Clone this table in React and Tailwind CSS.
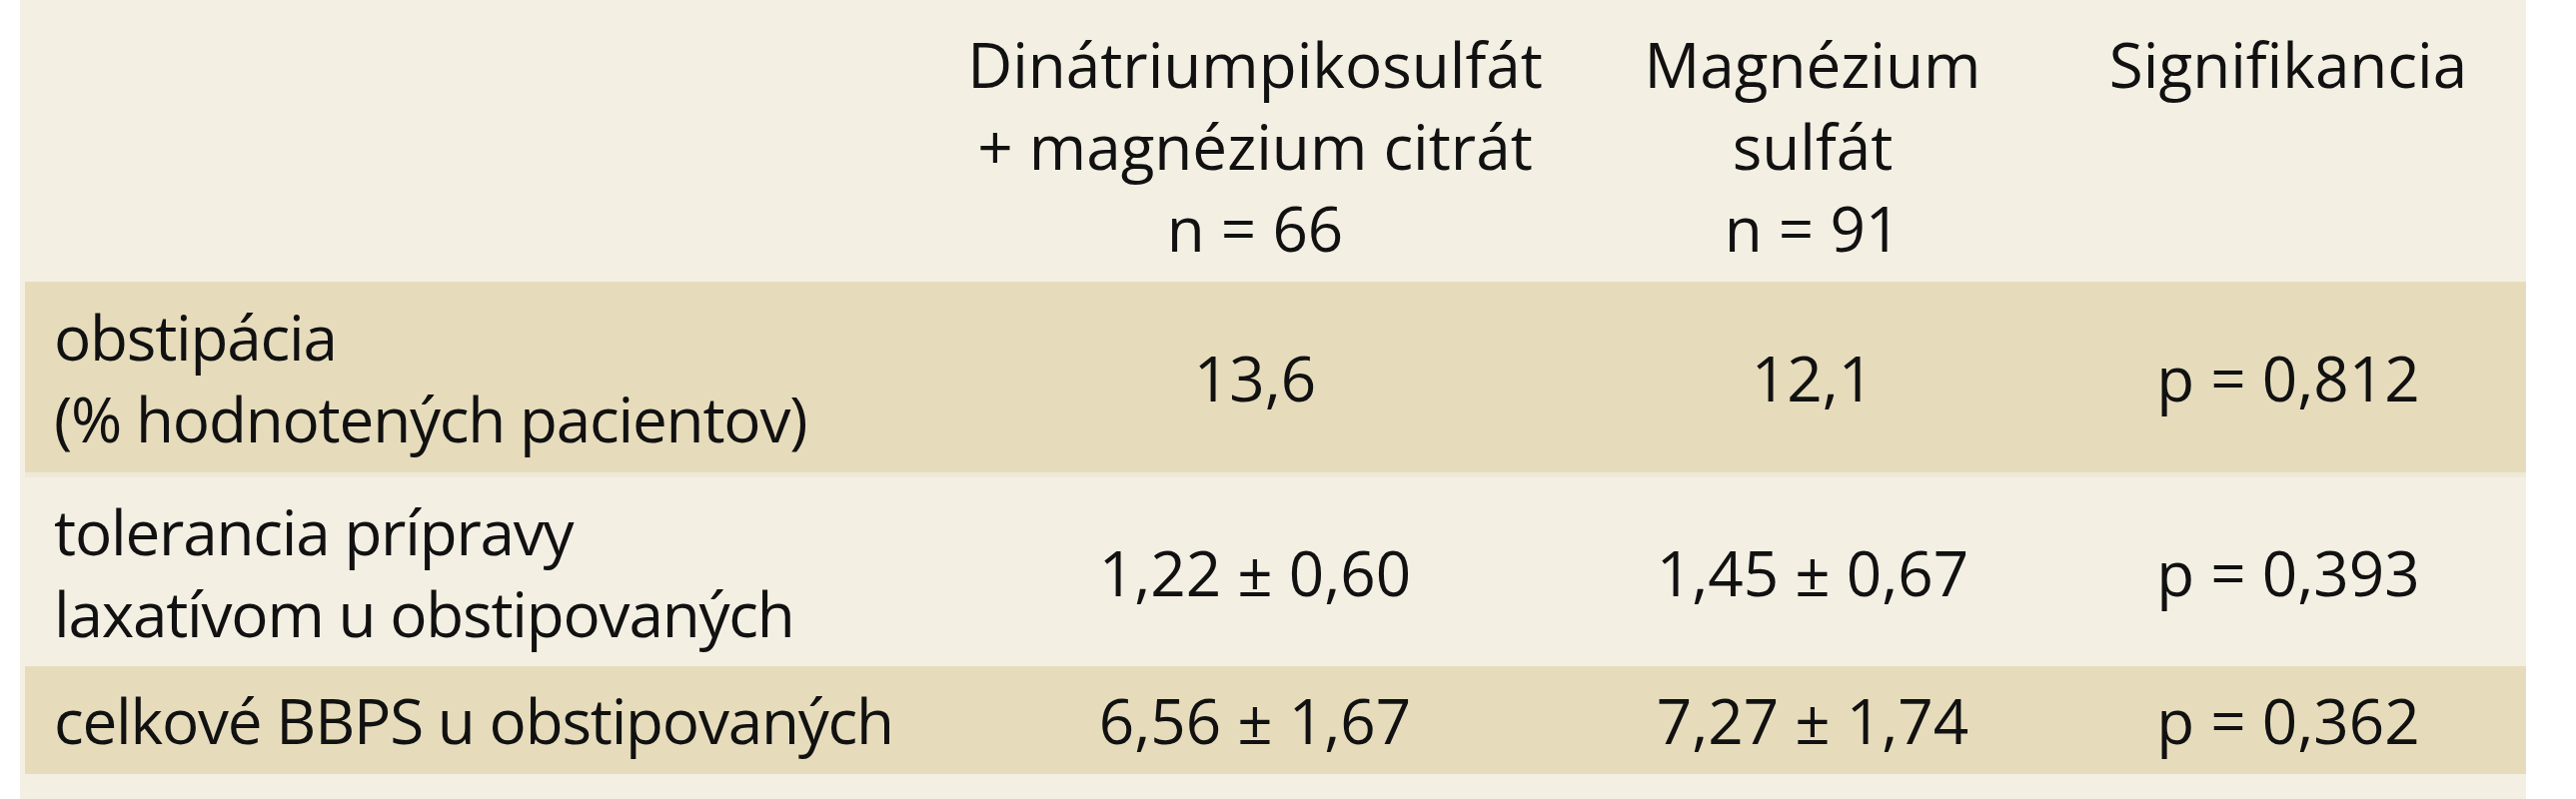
import React from "react";

const rows = [
  {
    label: ["obstipácia", "(% hodnotených pacientov)"],
    a: "13,6",
    b: "12,1",
    p: "p = 0,812",
    dark: true,
    h: "h-[191px]",
  },
  {
    label: ["tolerancia prípravy", "laxatívom u obstipovaných"],
    a: "1,22 ± 0,60",
    b: "1,45 ± 0,67",
    p: "p = 0,393",
    dark: false,
    h: "h-[194px]",
  },
  {
    label: ["celkové BBPS u obstipovaných"],
    a: "6,56 ± 1,67",
    b: "7,27 ± 1,74",
    p: "p = 0,362",
    dark: true,
    h: "h-[108px]",
  },
];

export default function App() {
  return (
    <div className="w-[2578px] h-[800px] bg-white overflow-hidden">
      <div
        className="ml-[20px] w-[2508px] h-[800px] bg-[#f3efe3] text-[#111111] text-[62px] leading-[82px]"
        style={{ fontFamily: '"Open Sans", "Noto Sans", sans-serif' }}
      >
        <div className="ml-[5px] h-[282px] pt-[23px] grid grid-cols-[911px_640px_476px_476px] items-start">
          <div></div>
          <div className="text-center">
            <div>Dinátriumpikosulfát</div>
            <div>+ magnézium citrát</div>
            <div>n = 66</div>
          </div>
          <div className="text-center">
            <div>Magnézium</div>
            <div>sulfát</div>
            <div>n = 91</div>
          </div>
          <div className="text-center">
            <div>Signifikancia</div>
          </div>
        </div>
        {rows.map((r, i) => (
          <div
            key={i}
            className={
              "ml-[5px] grid grid-cols-[911px_640px_476px_476px] items-center " +
              r.h +
              " " +
              (r.dark ? "bg-[#e6dcbc]" : "bg-[#f3efe3] border-t-[5px] border-[#efe9da]")
            }
          >
            <div className="pl-[29px] tracking-[-1.2px]">
              {r.label.map((l, j) => (
                <div key={j}>{l}</div>
              ))}
            </div>
            <div className="text-center">{r.a}</div>
            <div className="text-center">{r.b}</div>
            <div className="text-center">{r.p}</div>
          </div>
        ))}
      </div>
    </div>
  );
}
